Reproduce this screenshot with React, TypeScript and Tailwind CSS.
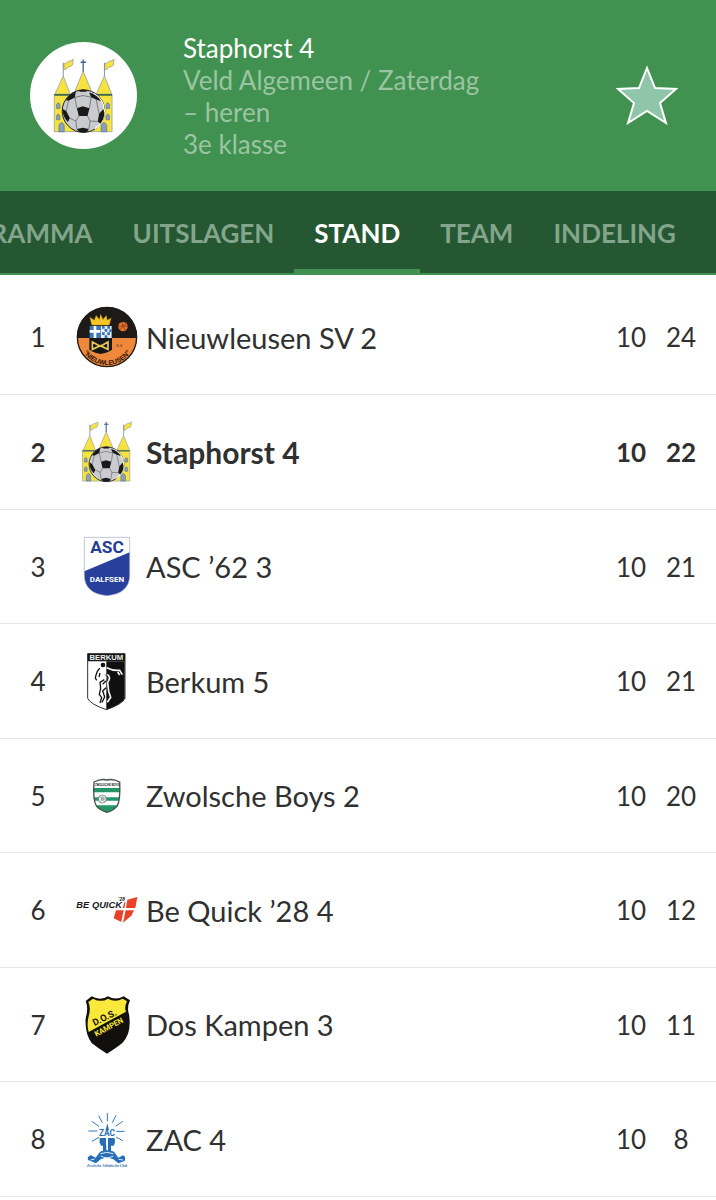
import type { ReactNode } from 'react';

function CastleArt() {
  return (
    <>
      <g fill="#f7e33f" stroke="#8390a0" strokeWidth="2" strokeLinejoin="round">
        <path d="M104 193H278V305H104Z" />
        <path d="M106 192L131 137L152 192Z" />
        <path d="M168 193V178L191 123L214 178V193Z" />
        <path d="M230 192L255 137L277 192Z" />
        <path d="M133 101Q141 99 146 93Q153 94 161 87L159 104Q153 111 147 110Q141 118 133 118Z" />
        <path d="M256 101Q264 99 269 93Q276 94 284 87L282 104Q276 111 270 110Q264 118 256 118Z" />
      </g>
      <path d="M131 137V97M255 137V97" stroke="#8590a5" strokeWidth="3" />
      <path d="M191 124V88M183 96H200" stroke="#3f6296" strokeWidth="4" />
      <path d="M104 194H152M230 194H278" stroke="#3b6a52" strokeWidth="5" />
      <g fill="#8aa0be" stroke="#55718f" strokeWidth="2">
        <path d="M111 235V223Q116 213 121 223V235ZM111 269V257Q116 247 121 257V269ZM260 235V223Q265 213 270 223V235ZM260 269V257Q265 247 270 257V269Z" />
        <path d="M118 305V286Q126 269 134 286V305ZM245 305V286Q254 269 262 286V305Z" />
      </g>
      <circle cx="192" cy="243" r="64" fill="#c9cbce" stroke="#222" strokeWidth="3" />
      <path d="M222 190A61 61 0 0 1 226 296" fill="none" stroke="#fff" strokeWidth="4" />
      <g fill="#191919">
        <path d="M172 234L190 228L210 234L204 258H178Z" />
        <path d="M139 210Q149 191 169 183L166 202L147 212Z" />
        <path d="M209 187Q233 193 245 213L230 208L215 201Z" />
        <path d="M129 236L140 243L151 264L145 276Q128 258 129 236Z" />
        <path d="M252 237L239 251L235 274L243 281Q260 260 252 237Z" />
        <path d="M172 297L190 293L208 297L203 306Q191 309 178 305Z" />
        <path d="M174 182L191 178L207 182L198 185H183Z" />
      </g>
      <path
        d="M172 234L166 202M147 212L140 243M210 234L215 201M166 202L190 196L215 201M230 208L239 251M204 258L212 273L235 274M178 258L169 273L151 264M169 273L172 297M212 273L208 297"
        fill="none"
        stroke="#555"
        strokeWidth="2"
      />
    </>
  );
}

function Crest({ box, label, children }: { box: string; label: string; children: ReactNode }) {
  return (
    <svg viewBox={box} role="img" aria-label={label} className="mx-auto block size-[62px]">
      {children}
    </svg>
  );
}

const nieuwleusen = (
  <Crest box="18 18 186 186" label="Nieuwleusen">
    <clipPath id="nl-disc">
      <circle cx="111" cy="111" r="90" />
    </clipPath>
    <g clipPath="url(#nl-disc)">
      <path d="M18 18H204V114H18Z" fill="#1d1a18" />
      <path d="M18 114H204V204H18Z" fill="#f0883c" />
    </g>
    <circle cx="111" cy="111" r="89" fill="none" stroke="#1d1a18" strokeWidth="4" />
    <path d="M65 76L59 51L73 60L78 46L88 58L92 42L99 58L109 46L112 60L124 53L118 76Z" fill="#f2c427" stroke="#6b4f10" />
    <path d="M58 77H126V148Q122 156 92 162Q62 156 58 148Z" fill="#171717" />
    <path d="M59 78H91V114H59Z" fill="#3878bd" />
    <path d="M59 94H91M75 78V114" stroke="#fff" strokeWidth="8" />
    <path d="M92 78H125V114H92Z" fill="#e5edf6" />
    <path d="M96 78h8v8h-8zM112 78h8v8h-8zM104 87h8v8h-8zM118 88h7v8h-7zM96 97h8v8h-8zM112 97h8v8h-8zM104 106h8v8h-8z" fill="#3474b8" />
    <path d="M67 126L91 139L114 126V148L91 137L67 148Z" fill="none" stroke="#e6c65b" strokeWidth="5" />
    <circle cx="159" cy="80" r="14" fill="#e5732e" />
    <path d="M147 80Q157 75 172 79M156 67Q158 80 167 91M149 89L160 79L168 70" fill="none" stroke="#803417" strokeWidth="2" />
    <text x="138" y="141" fontFamily="Liberation Sans, sans-serif" fontSize="12" fill="#572912">S.V.</text>
    <path id="nl-arc" d="M28 124A84 84 0 0 0 194 124" fill="none" />
    <text fontFamily="Liberation Sans, sans-serif" fontWeight="bold" fontSize="20" fill="#2c1509" textAnchor="middle">
      <textPath href="#nl-arc" startOffset="50%">“NIEUWLEUSEN”</textPath>
    </text>
  </Crest>
);

const staphorst = (
  <Crest box="80 84 228 228" label="Staphorst">
    <CastleArt />
  </Crest>
);

const asc = (
  <Crest box="18 16 186 186" label="ASC Dalfsen">
    <path d="M43 23H179V134Q180 192 111 198Q42 192 43 134Z" fill="#fff" />
    <path d="M43 125L179 68V134Q180 192 111 198Q42 192 43 134Z" fill="#26409b" />
    <path d="M43 23H179V134Q180 192 111 198Q42 192 43 134Z" fill="none" stroke="#9da7c5" strokeWidth="2" />
    <text x="111" y="69" textAnchor="middle" fontFamily="Roboto, Liberation Sans, sans-serif" fontWeight="bold" fontSize="52" fill="#233c94">ASC</text>
    <text x="111" y="158" textAnchor="middle" fontFamily="Roboto, Liberation Sans, sans-serif" fontWeight="bold" fontSize="24" fill="#fff">DALFSEN</text>
  </Crest>
);

const berkum = (
  <Crest box="18 15 186 186" label="Berkum">
    <path d="M53 26H165V160Q158 177 109 194Q60 177 53 160Z" fill="#fff" stroke="#333" strokeWidth="3" />
    <path d="M109 49H164V160Q157 177 109 194Z" fill="#101010" />
    <path d="M53 26H165V49H53Z" fill="#161616" />
    <text x="109" y="46" textAnchor="middle" fontFamily="Liberation Sans, sans-serif" fontWeight="bold" fontSize="23" fill="#eee">BERKUM</text>
    <circle cx="99" cy="60" r="7" fill="#111" />
    <path d="M90 70Q81 74 76 99L80 106M90 84L87 96M103 104L90 112L92 130L88 148L95 158L90 174M108 128L98 138L104 156L96 172M108 108L98 118" fill="none" stroke="#111" strokeWidth="4" />
    <path d="M110 68Q130 78 149 76L157 89M112 88Q124 96 113 113L116 139L122 157L112 172M143 81L149 90" fill="none" stroke="#f5f5f5" strokeWidth="5" />
    <path d="M104 88Q110 94 111 103" fill="none" stroke="#8c8c8c" strokeWidth="3" />
  </Crest>
);

const zwolsche = (
  <Crest box="18 12 186 186" label="Zwolsche Boys">
    <clipPath id="zb-shield">
      <path d="M72 66Q94 55 111 60Q128 55 149 66Q152 121 141 139Q128 153 111 157Q91 151 79 138Q68 119 72 66Z" />
    </clipPath>
    <g clipPath="url(#zb-shield)">
      <path d="M65 55H155V160H65Z" fill="#fff" />
      <path d="M65 84H155V97H65ZM65 112H155V122H65ZM65 136H155V160H65Z" fill="#259568" />
    </g>
    <path d="M72 66Q94 55 111 60Q128 55 149 66Q152 121 141 139Q128 153 111 157Q91 151 79 138Q68 119 72 66Z" fill="none" stroke="#46514d" strokeWidth="4" />
    <text x="111" y="78" textAnchor="middle" fontFamily="Roboto, Liberation Sans, sans-serif" fontWeight="bold" fontSize="9" fill="#28332d">ZWOLSCHE BOYS</text>
    <circle cx="97" cy="117" r="12" fill="#eee" stroke="#5b6661" strokeWidth="2" />
    <path d="M93 113L98 110L104 115L101 121H94ZM88 110L93 113M101 121L104 126M94 121L89 126" fill="#aeb5b2" stroke="#5b6661" />
  </Crest>
);

const beQuick = (
  <Crest box="18 12 186 186" label="Be Quick '28">
    <path d="M172 74L202 66L196 99H168ZM138 106H161L154 141L131 130ZM167 106H192L184 122L159 143Z" fill="#e84329" />
    <path d="M163 82L167 80L163 99H158Z" fill="#e84329" />
    <text x="19" y="98" fontFamily="Liberation Sans, sans-serif" fontWeight="bold" fontStyle="italic" fontSize="28" fill="#17191d">BE QUICK</text>
    <text x="144" y="77" fontFamily="Liberation Sans, sans-serif" fontWeight="bold" fontStyle="italic" fontSize="15" fill="#17191d">’28</text>
  </Crest>
);

const dos = (
  <Crest box="18 24 186 186" label="D.O.S. Kampen">
    <path d="M65 34Q92 48 114 34Q137 47 161 34L180 46Q170 68 177 88Q186 145 157 174Q140 188 111 206Q82 188 65 174Q44 145 47 100Q56 70 47 48Z" fill="#11100d" />
    <path d="M69 41Q94 54 114 41Q136 53 158 41L171 49Q162 68 168 80L56 141Q50 121 55 98Q64 70 55 51Z" fill="#fae83a" />
    <g fontFamily="Roboto, Liberation Sans, sans-serif" fontWeight="bold" textAnchor="middle">
      <text transform="translate(108 106) rotate(-26)" fontSize="28" fill="#11100d">D.O.S.</text>
      <text transform="translate(120 133) rotate(-28)" fontSize="23" fill="#fae83a">KAMPEN</text>
    </g>
  </Crest>
);

const zac = (
  <Crest box="18 24 186 186" label="ZAC">
    <path d="M112 39V64M86 47L97 68M138 46L127 68M65 64L87 79M158 64L137 79M55 93H82M164 94H139M66 124L87 112M158 122L138 111" stroke="#3177bd" strokeWidth="3" />
    <text x="111" y="109" textAnchor="middle" fontFamily="Roboto, Liberation Sans, sans-serif" fontWeight="bold" fontSize="25" fill="#286eb6">ZAC</text>
    <path d="M112 70L107 91H117Z" fill="#286eb6" />
    <path d="M89 114H108V137H93Q86 125 89 114ZM114 114H133Q138 125 131 137H114ZM99 137H109V157H99ZM114 137H123V157H114Z" fill="#286eb6" />
    <path d="M54 180Q50 169 63 166L77 173L90 155Q111 147 132 155L145 173L159 166Q169 171 164 183L145 190L130 178Q111 168 92 178L78 190Z" fill="#286eb6" />
    <path d="M91 161Q111 153 130 161M92 168Q111 179 130 168M62 180L74 177M146 178L159 180" fill="none" stroke="#d9e8f6" strokeWidth="3" />
    <text x="111" y="202" textAnchor="middle" fontFamily="Liberation Serif, serif" fontWeight="bold" fontStyle="italic" fontSize="11" fill="#2868aa">Zwolsche Athletische Club</text>
  </Crest>
);

type Standing = { team: string; played: number; points: number; crest: ReactNode; own?: boolean };

const standings: Standing[] = [
  { team: 'Nieuwleusen SV 2', played: 10, points: 24, crest: nieuwleusen },
  { team: 'Staphorst 4', played: 10, points: 22, crest: staphorst, own: true },
  { team: 'ASC ’62 3', played: 10, points: 21, crest: asc },
  { team: 'Berkum 5', played: 10, points: 21, crest: berkum },
  { team: 'Zwolsche Boys 2', played: 10, points: 20, crest: zwolsche },
  { team: 'Be Quick ’28 4', played: 10, points: 12, crest: beQuick },
  { team: 'Dos Kampen 3', played: 10, points: 11, crest: dos },
  { team: 'ZAC 4', played: 10, points: 8, crest: zac },
];

const tabs = ['PROGRAMMA', 'UITSLAGEN', 'STAND', 'TEAM', 'INDELING'];

export default function App() {
  return (
    <main className="min-h-screen overflow-hidden bg-white font-['Lato','Liberation_Sans',sans-serif] text-[#303030]">
      <header className="flex h-[191px] items-center bg-[#419151] pr-[38px] pl-[30px]">
        <div className="size-[107px] shrink-0 overflow-hidden rounded-full bg-white">
          <svg viewBox="31 35 322 322" role="img" aria-label="Staphorst" className="size-full">
            <CastleArt />
          </svg>
        </div>
        <div className="ml-[46px] flex-1 text-[26px] leading-8 text-[#9bc5a2]">
          <h1 className="text-white">Staphorst 4</h1>
          <p>
            Veld Algemeen / Zaterdag
            <br />– heren
          </p>
          <p>3e klasse</p>
        </div>
        <button type="button" aria-label="Favoriet" className="shrink-0">
          <svg viewBox="0 0 62 62" className="block size-[62px]">
            <path d="M31 3L39 23L60 24L44 38L50 58L31 46L12 58L18 38L2 24L23 23Z" fill="#8fc5a9" stroke="#fff" strokeWidth="2" />
          </svg>
        </button>
      </header>

      <nav aria-label="Onderdelen" className="flex h-[84px] justify-end overflow-hidden border-b-2 border-[#419151] bg-[#255733] pr-5">
        {tabs.map((tab) => (
          <button
            key={tab}
            type="button"
            aria-current={tab === 'STAND' ? 'page' : undefined}
            className={
              tab === 'STAND'
                ? 'shrink-0 border-b-4 border-[#419151] px-5 pt-1.5 text-[26px] font-bold text-white'
                : 'shrink-0 border-b-4 border-transparent px-5 pt-1.5 text-[26px] font-bold text-[#83a58b]'
            }
          >
            {tab}
          </button>
        ))}
      </nav>

      <table aria-label="Stand" className="mt-[5px] w-full border-collapse text-[29px]">
        <tbody>
          {standings.map((row, i) => (
            <tr
              key={row.team}
              className={
                row.own
                  ? 'border-b border-[#e7e7e7] font-bold odd:h-[114px] even:h-[115px]'
                  : 'border-b border-[#e7e7e7] odd:h-[114px] even:h-[115px]'
              }
            >
              <td className="w-[76px] p-0 pt-0.5 text-center text-[26px]">{i + 1}</td>
              <td className="w-[62px] p-0">{row.crest}</td>
              <td className={row.own ? 'p-0 pt-0.5 pl-2 text-[30px]' : 'p-0 pt-0.5 pl-2'}>{row.team}</td>
              <td className="w-[50px] p-0 pt-0.5 text-center text-[26px]">{row.played}</td>
              <td className="w-[60px] p-0 pt-0.5 pr-2.5 text-center text-[26px]">{row.points}</td>
            </tr>
          ))}
        </tbody>
      </table>
    </main>
  );
}
